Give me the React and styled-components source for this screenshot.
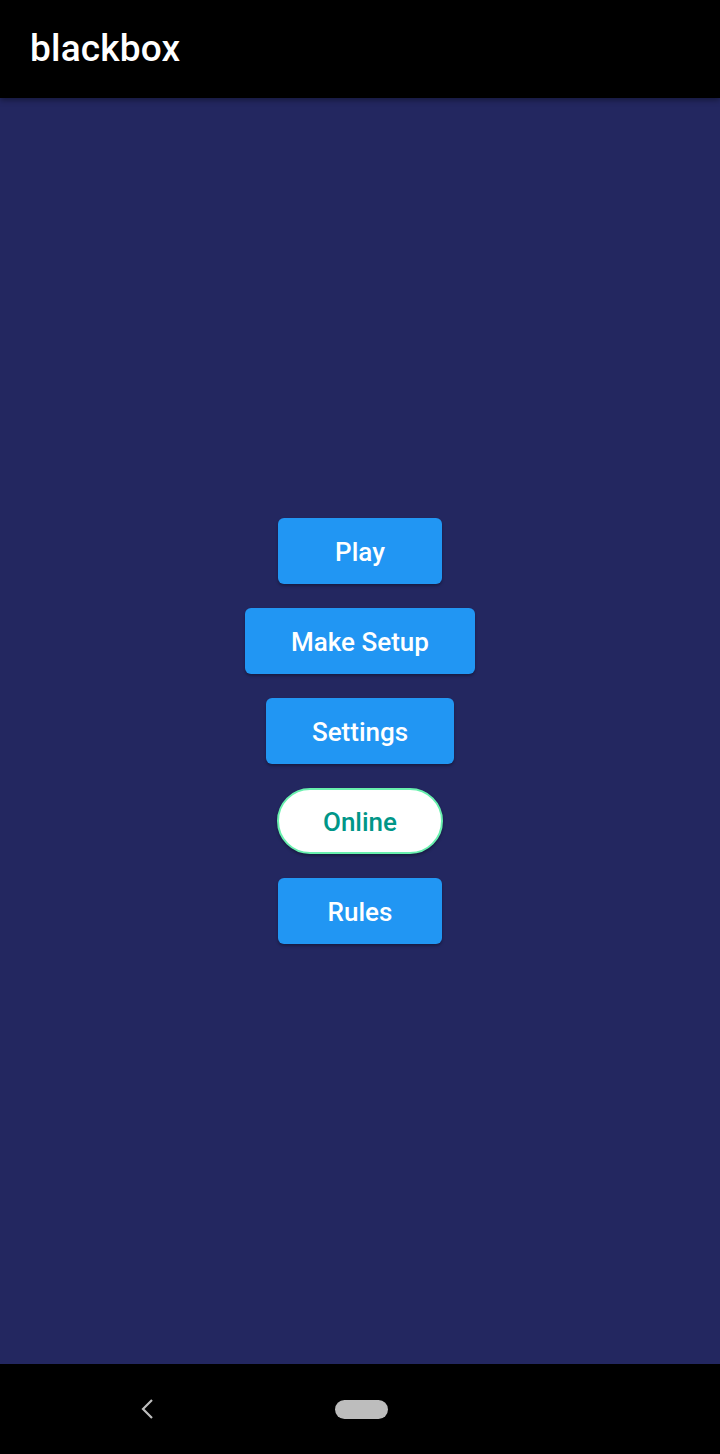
import React from 'react';
import styled, { createGlobalStyle } from 'styled-components';

const GlobalStyle = createGlobalStyle`
  html, body {
    margin: 0;
    padding: 0;
    background: #000;
  }
  body {
    font-family: Roboto, "Noto Sans", sans-serif;
  }
`;

const Screen = styled.div`
  width: 720px;
  height: 1454px;
  display: flex;
  flex-direction: column;
  background: #232760;
`;

const AppBar = styled.header`
  height: 98px;
  flex-shrink: 0;
  background: #000;
  display: flex;
  align-items: center;
  padding: 0 30px;
  box-shadow: 0 2px 6px rgba(0, 0, 0, 0.4);
  position: relative;
  z-index: 1;

  h1 {
    margin: 0 0 2px;
    color: #fff;
    font-size: 37px;
    font-weight: 500;
    letter-spacing: 0.2px;
  }
`;

const Body = styled.main`
  flex: 1;
  display: flex;
  flex-direction: column;
  align-items: center;
  justify-content: center;
  gap: 24px;
`;

const MenuButton = styled.button`
  box-sizing: border-box;
  min-width: 164px;
  height: 66px;
  padding: 2px ${p => (p.outlined ? '44px' : '46px')} 0;
  border: ${p => (p.outlined ? '2px solid #69f0ae' : 'none')};
  border-radius: ${p => (p.outlined ? '33px' : '6px')};
  background: ${p => (p.outlined ? '#fff' : '#2196f3')};
  color: ${p => (p.outlined ? '#009688' : '#fff')};
  font-family: Roboto, sans-serif;
  font-size: 26px;
  font-weight: 500;
  box-shadow: 0 2px 3px rgba(0, 0, 0, 0.3);
  cursor: pointer;
`;

const NavBar = styled.nav`
  height: 90px;
  flex-shrink: 0;
  background: #000;
  display: flex;
  align-items: center;
  padding-left: 138px;
  gap: 177px;
`;

const HomePill = styled.div`
  width: 53px;
  height: 19px;
  border-radius: 10px;
  background: #bdbdbd;
`;

const BackIcon = () => (
  <svg width="20" height="22" viewBox="0 0 20 22">
    <path d="M14 2 L5 11 L14 20" fill="none" stroke="#bdbdbd" strokeWidth="2.2" />
  </svg>
);

const App = () => {
  return (
    <Screen>
      <GlobalStyle />
      <AppBar>
        <h1>blackbox</h1>
      </AppBar>
      <Body>
        <MenuButton>Play</MenuButton>
        <MenuButton>Make Setup</MenuButton>
        <MenuButton>Settings</MenuButton>
        <MenuButton outlined>Online</MenuButton>
        <MenuButton>Rules</MenuButton>
      </Body>
      <NavBar>
        <BackIcon />
        <HomePill />
      </NavBar>
    </Screen>
  );
};

export default App;
